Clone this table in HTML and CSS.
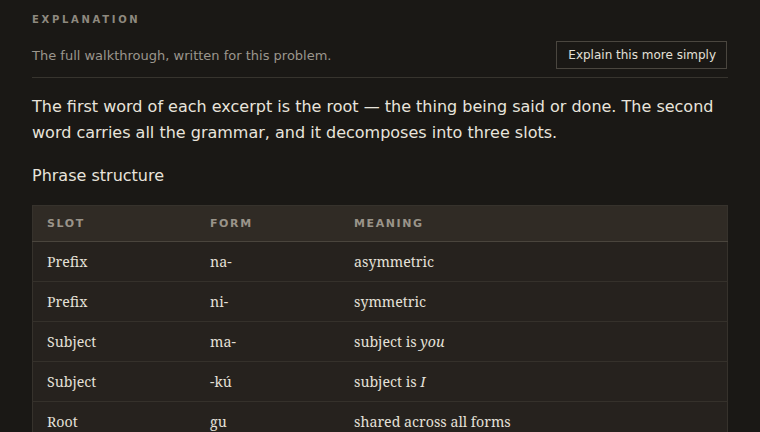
FILE: index.html
```html
<!DOCTYPE html>
<html>
<head>
<meta charset="utf-8">
<link rel="stylesheet" href="styles.css">
</head>
<body>
<div class="page">
  <div class="label">EXPLANATION</div>
  <div class="head-row">
    <div class="sub">The full walkthrough, written for this problem.</div>
    <button class="btn">Explain this more simply</button>
  </div>
  <p class="lead">The first word of each excerpt is the root — the thing being said or done. The second word carries all the grammar, and it decomposes into three slots.</p>
  <h3 class="sec">Phrase structure</h3>
  <table class="tbl">
    <thead>
      <tr><th class="c1">SLOT</th><th class="c2">FORM</th><th>MEANING</th></tr>
    </thead>
    <tbody>
      <tr><td>Prefix</td><td>na-</td><td>asymmetric</td></tr>
      <tr><td>Prefix</td><td>ni-</td><td>symmetric</td></tr>
      <tr><td>Subject</td><td>ma-</td><td>subject is <em>you</em></td></tr>
      <tr><td>Subject</td><td>-kú</td><td>subject is <em>I</em></td></tr>
      <tr><td>Root</td><td>gu</td><td>shared across all forms</td></tr>
    </tbody>
  </table>
</div>
</body>
</html>
```
FILE: styles.css
```css
html, body { margin: 0; padding: 0; background: #1a1815; }
body { font-family: "DejaVu Sans", sans-serif; color: #e6e2da; }
.page { padding: 13px 32px 0 32px; }
.label { font-size: 10px; font-weight: bold; letter-spacing: 2.7px; color: #8e897f; line-height: 14px; }
.head-row { display: flex; justify-content: space-between; align-items: center; margin-top: 14px; padding-bottom: 8px; border-bottom: 1px solid #37342e; }
.sub { font-size: 13px; color: #9b968d; }
.btn { font-family: "DejaVu Sans", sans-serif; font-size: 12px; line-height: 16px; color: #e4e0d8; background: transparent; border: 1px solid #4a463f; padding: 5px 10px 5px 11px; margin: 0 1px 0 0; }
.lead { font-size: 16px; line-height: 26px; margin: 16px 0 0 0; color: #e8e4dc; }
.sec { font-size: 16px; font-weight: normal; margin: 17px 0 0 0; line-height: 26px; color: #e8e4dc; }
.tbl { width: 100%; border-collapse: collapse; margin-top: 16px; border: 1px solid #36322c; font-family: "Noto Serif", "DejaVu Serif", serif; }
.tbl th { background: #302b25; text-align: left; font-family: "DejaVu Sans", sans-serif; font-size: 11px; font-weight: bold; letter-spacing: 1.6px; color: #9a948a; height: 35px; padding: 0 14px; border-bottom: 1px solid #4a453d; }
.tbl th.c1 { width: 135px; }
.tbl th.c2 { width: 116px; }
.tbl td { background: #26221e; font-size: 14.2px; color: #e4e0d8; height: 39px; padding: 0 14px; border-top: 1px solid #35312b; }
.tbl em { font-style: italic; }
```
